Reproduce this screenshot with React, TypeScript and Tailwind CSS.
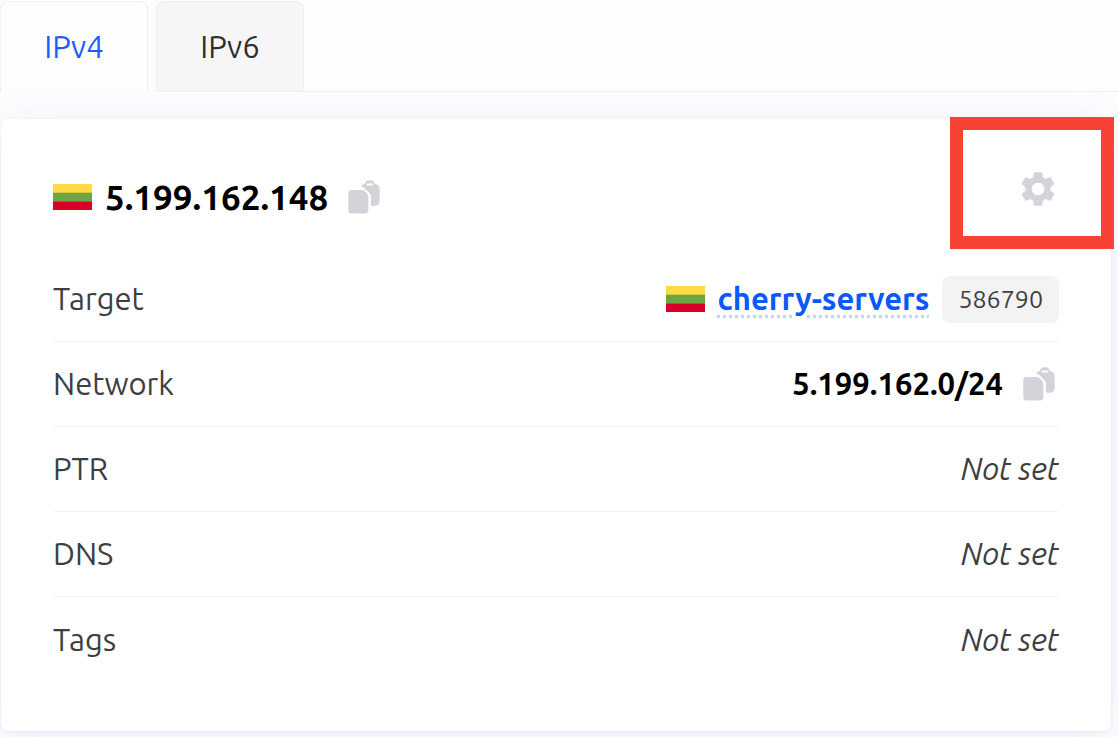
import { useState } from "react";
import type { ReactNode } from "react";
import { MdSettings } from "react-icons/md";
import clsx from "clsx";

const tabs = ["IPv4", "IPv6"];

function Flag() {
  return (
    <svg viewBox="0 0 39 26" className="h-[26px] w-[39px] shrink-0" role="img" aria-label="Lithuania">
      <rect width="39" height="9" fill="#ffda44" />
      <rect y="8.7" width="39" height="9" fill="#6da544" />
      <rect y="17.4" width="39" height="8.6" fill="#d80027" />
    </svg>
  );
}

function CopyButton() {
  return (
    <button type="button" aria-label="Copy" className="shrink-0 text-[#d4d3d9]">
      <svg viewBox="0 0 32 34" className="h-[34px] w-8" fill="currentColor">
        <path d="M3.3 10h10.7c1 0 1.7.3 2.4 1l3 3.2c.7.7.9 1.3.9 2.3v13.9c0 1.900-1.100 3-3 3h-14c-1.900 0-3-1.100-3-3V13c0-1.900 1.100-3 3-3z" />
        <path
          fillRule="evenodd"
          d="M13 6.300c.7-1.500 2-2.300 3.900-2.400.5-2.200 1.900-3.600 4-3.600h1.900c2.100 0 3.500 1.400 4 3.600 3.100.1 4.900 1.900 4.900 5v11.900c0 3.100-1.800 5-4.900 5h-3.900V16.500c0-1.400-.4-2.300-1.400-3.300l-4.700-4.600c-1-1-2-1.600-3.800-2.300zM19.800 3.400c-.7 0-1.100.4-1.100 1s.4 1 1.100 1h4.100c.7 0 1.100-.4 1.100-1s-.4-1-1.100-1z"
        />
      </svg>
    </button>
  );
}

function Row({ label, children }: { label: string; children: ReactNode }) {
  return (
    <div className="flex h-[85px] items-center justify-between border-b border-[#f2f2f4] last:border-b-0">
      <dt>{label}</dt>
      <dd className="flex items-center">{children}</dd>
    </div>
  );
}

export default function App() {
  const [active, setActive] = useState("IPv4");

  return (
    <div className="min-h-screen overflow-hidden bg-[#fdfdfe] pt-px font-['Ubuntu','Noto_Sans',sans-serif] text-[31px] leading-9 text-[#3d3f43]">
      <div role="tablist" className="flex gap-2">
        {tabs.map((tab) => (
          <button
            key={tab}
            type="button"
            role="tab"
            aria-selected={active === tab}
            onClick={() => setActive(tab)}
            className={clsx(
              "h-[91px] w-[148px] rounded-t-lg border border-[#f0f0f4]",
              active === tab ? "border-b-transparent text-[#1a5cff]" : "bg-[#f6f6f9] text-[#2e2e32]"
            )}
          >
            {tab}
          </button>
        ))}
        {/* keeps the bottom line running under the gap and up to the window edge */}
        <div className="-ml-2 flex-1 border-b border-[#f0f0f4]" />
      </div>

      <section className="mt-[27px] mr-[7px] ml-px rounded-lg bg-white px-[52px] pt-12 pb-[49px] shadow-[0_6px_44px_rgba(90,90,230,0.09),0_1px_4px_rgba(90,90,150,0.08)]">
        <header className="flex h-[90px] items-start justify-between">
          <div className="flex h-[60px] items-center">
            <Flag />
            <h1 className="mr-5 ml-[13px] text-[35px] leading-10 font-bold text-black">5.199.162.148</h1>
            <CopyButton />
          </div>
          <div className="relative">
            <button type="button" aria-label="Settings" className="block pt-px text-[#d4d3d9]">
              <MdSettings size={42} />
            </button>
            {/* highlight frame around the settings button */}
            <div className="pointer-events-none absolute -top-[50px] -right-[55px] h-[132px] w-[164px] border-[13px] border-[#f64336]" />
          </div>
        </header>

        <dl>
          <Row label="Target">
            <Flag />
            <a
              href="#cherry-servers"
              className="mx-[13px] font-bold text-[#0a58ff] underline decoration-[#c2d5ff] decoration-[3px] decoration-dotted underline-offset-[5px]"
            >
              cherry-servers
            </a>
            <span className="rounded-lg bg-[#f3f3f3] px-4 py-[6px] text-[25px] leading-[35px]">586790</span>
          </Row>
          <Row label="Network">
            <span className="mr-5 font-bold text-black">5.199.162.0/24</span>
            <span className="mr-1 flex">
              <CopyButton />
            </span>
          </Row>
          <Row label="PTR">
            <em>Not set</em>
          </Row>
          <Row label="DNS">
            <em>Not set</em>
          </Row>
          <Row label="Tags">
            <em>Not set</em>
          </Row>
        </dl>
      </section>
    </div>
  );
}
